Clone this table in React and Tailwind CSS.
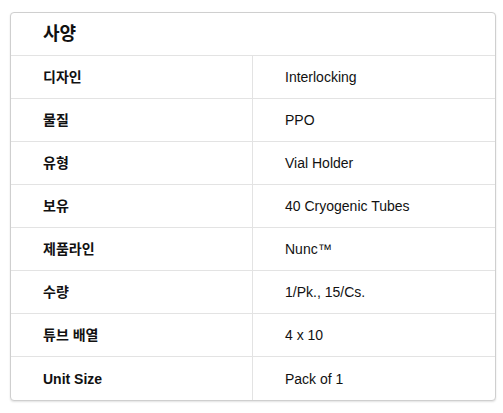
import React from "react";

const rows = [
  ["디자인", "Interlocking"],
  ["물질", "PPO"],
  ["유형", "Vial Holder"],
  ["보유", "40 Cryogenic Tubes"],
  ["제품라인", "Nunc™"],
  ["수량", "1/Pk., 15/Cs."],
  ["튜브 배열", "4 x 10"],
  ["Unit Size", "Pack of 1"],
];

export default function App() {
  return (
    <div
      className="w-[503px] h-[413px] bg-white pt-[12px] pl-[10px]"
      style={{ fontFamily: '"Liberation Sans", Arial, "Noto Sans CJK KR", sans-serif' }}
    >
      <div className="w-[486px] border border-[#cfcfcf] rounded-[4px] shadow-[0_1px_2px_rgba(0,0,0,0.12)] bg-white overflow-hidden">
        <div className="h-[43px] flex items-center pl-[32px] border-b border-[#e3e3e3]">
          <span className="text-[18px] font-bold text-[#111]">사양</span>
        </div>
        {rows.map(([k, v], i) => (
          <div
            key={k}
            className={
              "flex h-[43px] " + (i < rows.length - 1 ? "border-b border-[#e3e3e3]" : "")
            }
          >
            <div className="w-[242px] shrink-0 border-r border-[#e3e3e3] flex items-center pl-[32px] pt-[1px] text-[14px] font-bold text-[#111]">
              {k}
            </div>
            <div className="flex-1 flex items-center pl-[32px] pt-[1px] text-[14px] text-[#111]">
              {v}
            </div>
          </div>
        ))}
      </div>
    </div>
  );
}
